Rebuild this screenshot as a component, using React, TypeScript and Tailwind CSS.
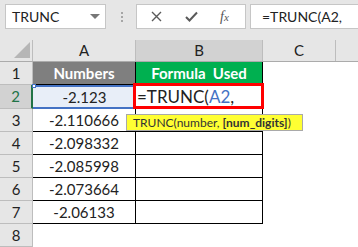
const values = ['-2.123', '-2.110666', '-2.098332', '-2.085998', '-2.073664', '-2.06133']

function Toolbar() {
  return (
    <div className="h-[40px] bg-[#e6e6e6] flex items-start pt-[4px]">
      <div className="ml-[5px] w-[101px] h-[25px] bg-white border border-[#c6c6c6] flex items-center justify-between pl-[6px] pr-[5px]">
        <span className="text-[14px] text-[#222]">TRUNC</span>
        <svg width="10" height="6" viewBox="0 0 10 6">
          <path d="M0 0 L10 0 L5 5 Z" fill="#777" />
        </svg>
      </div>
      <div className="ml-[14px] w-[3px] h-[25px] flex flex-col items-center justify-center gap-[2px]">
        <div className="w-[2px] h-[2px] bg-[#a6a6a6]" />
        <div className="w-[2px] h-[2px] bg-[#a6a6a6]" />
        <div className="w-[2px] h-[2px] bg-[#a6a6a6]" />
      </div>
      <div className="ml-[13px] w-[110px] h-[25px] bg-white border border-[#c6c6c6] flex items-center">
        <svg className="ml-[14px]" width="11" height="11" viewBox="0 0 11 11">
          <path d="M1 1 L10 10 M10 1 L1 10" stroke="#5a5a5a" strokeWidth="1.4" />
        </svg>
        <svg className="ml-[23px]" width="13" height="11" viewBox="0 0 13 11">
          <path d="M1 6 L4.5 9.5 L12 1.5" stroke="#5a5a5a" strokeWidth="2" fill="none" />
        </svg>
        <span className="ml-[22px] text-[14px] italic text-[#555] font-['Liberation_Serif',serif]">
          f<span className="text-[11px]">x</span>
        </span>
      </div>
      <div className="ml-[4px] flex-1 h-[25px] bg-white border border-[#c6c6c6] border-r-0 flex items-center pl-[11px]">
        <span className="text-[14px] text-[#222]">=TRUNC(A2,</span>
      </div>
    </div>
  )
}

function HeaderRow() {
  return (
    <div className="h-[22px] flex bg-[#e6e6e6] border-b border-[#ababab] text-[15px] text-[#222]">
      <div className="w-[33px] border-r border-[#bdbdbd] flex items-end justify-end pr-[2px] pb-[3px]">
        <svg width="16" height="16" viewBox="0 0 16 16">
          <path d="M16 0 L16 16 L0 16 Z" fill="#b6b6b6" />
        </svg>
      </div>
      <div className="w-[103px] border-r border-[#bdbdbd] flex items-center justify-center">A</div>
      <div className="w-[127px] bg-[#d2d2d2] border-r border-[#bdbdbd] flex items-center justify-center">B</div>
      <div className="w-[73px] border-r border-[#bdbdbd] flex items-center justify-center">C</div>
      <div className="flex-1" />
    </div>
  )
}

function RowHead({ n, active }: { n: number; active?: boolean }) {
  return (
    <div
      className={
        active
          ? 'w-[33px] bg-[#d2d2d2] border-r-2 border-[#217346] border-b border-b-[#bdbdbd] flex items-center justify-center text-[#217346]'
          : 'w-[33px] bg-[#e6e6e6] border-r border-[#bdbdbd] border-b border-b-[#bdbdbd] flex items-center justify-center text-[#222]'
      }
    >
      {n}
    </div>
  )
}

export default function App() {
  return (
    <div className="w-[358px] h-[247px] overflow-hidden bg-white relative font-['Lato',sans-serif]">
      <Toolbar />
      <HeaderRow />

      <div className="h-[23px] flex text-[15px]">
        <RowHead n={1} />
        <div className="w-[103px] bg-[#7f7f7f] border-r border-b border-black flex items-center justify-center text-white font-bold">
          Numbers
        </div>
        <div className="w-[127px] bg-[#00b050] border-r border-b border-black flex items-center justify-center text-white font-bold whitespace-pre">
          Formula  Used
        </div>
        <div className="flex-1" />
      </div>

      <div className="h-[24px] flex text-[15px]">
        <RowHead n={2} active />
        <div className="w-[103px] relative bg-[#e8eef8] border-y-2 border-[#4472c4] flex items-center justify-center text-[#222]">
          {values[0]}
          <div className="absolute -left-[1px] -top-[3px] w-[4px] h-[4px] bg-white border border-[#4472c4]" />
        </div>
        <div className="w-[127px] relative border-r border-b border-black flex items-center text-[17px] text-[#222]">
          <span className="pl-[1px]">
            =TRUNC(<span className="text-[#4472c4]">A2</span>,
          </span>
          <div className="absolute -left-[3px] -top-[2px] w-[131px] h-[26px] border-[3px] border-[#ff0000]" />
        </div>
        <div className="flex-1" />
      </div>

      {values.slice(1).map((v, i) => (
        <div key={v} className="h-[23px] flex text-[15px]">
          <RowHead n={i + 3} />
          <div className="w-[103px] border-r border-b border-black flex items-center justify-center text-[#222]">{v}</div>
          <div className="w-[127px] border-r border-b border-black" />
          <div className="flex-1" />
        </div>
      ))}

      <div className="h-[23px] flex text-[15px]">
        <RowHead n={8} />
        <div className="flex-1" />
      </div>

      <div className="absolute left-[126px] top-[114px] w-[177px] h-[17px] bg-[#ffff33] border border-[#a9a9a9] flex items-center pl-[6px] text-[12px] text-[#333] whitespace-nowrap">
        TRUNC(number, <span className="font-bold ml-[3px]">[num_digits]</span>)
      </div>
    </div>
  )
}
